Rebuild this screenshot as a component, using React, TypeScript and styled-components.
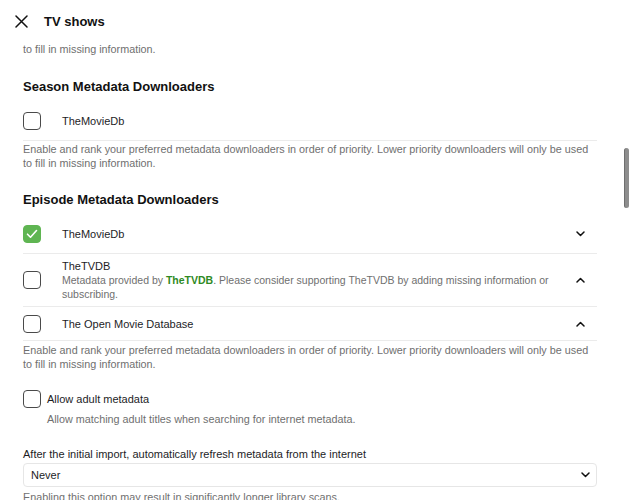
import React from "react";
import styled, { createGlobalStyle } from "styled-components";

const Global = createGlobalStyle`
  html, body { margin: 0; padding: 0; background: #fff; }
  body { font-family: "Liberation Sans", Arial, sans-serif; color: #1d1d1f; }
  * { box-sizing: border-box; }
`;

const Page = styled.div`
  position: relative;
  width: 630px;
  height: 500px;
  overflow: hidden;
  background: #fff;
`;

const Header = styled.header`
  display: flex;
  align-items: center;
  height: 42px;
  padding-left: 15px;
  gap: 16px;
`;

const Title = styled.h1`
  margin: 0;
  font-size: 13px;
  font-weight: 700;
  color: #111;
`;

const Content = styled.main`
  padding: 0 33px 0 23px;
`;

const Description = styled.p<{ $top?: number; $indent?: number }>`
  margin: ${(p) => p.$top ?? 0}px 0 0 ${(p) => p.$indent ?? 0}px;
  font-size: 10.8px;
  line-height: 14px;
  color: #6f6f6f;
`;

const Heading = styled.h2<{ $top: number }>`
  margin: ${(p) => p.$top}px 0 6px;
  font-size: 13px;
  line-height: 18px;
  font-weight: 700;
  color: #111;
`;

const List = styled.div`
  display: flex;
  flex-direction: column;
`;

const Row = styled.div<{ $compact?: boolean }>`
  display: flex;
  align-items: center;
  min-height: ${(p) => (p.$compact ? 34 : 39)}px;
  padding: 5px 0;
  border-bottom: 1px solid #ebebeb;
`;

const Box = styled.span<{ $checked?: boolean }>`
  flex: none;
  width: 18px;
  height: 18px;
  border-radius: 4px;
  border: 1.5px solid ${(p) => (p.$checked ? "#5fb552" : "#4a4a4a")};
  background: ${(p) => (p.$checked ? "#5fb552" : "#fff")};
  display: flex;
  align-items: center;
  justify-content: center;
`;

const RowText = styled.div`
  flex: 1;
  margin-left: 21px;
  display: flex;
  flex-direction: column;
`;

const RowLabel = styled.span`
  font-size: 11px;
  line-height: 14px;
  color: #1d1d1f;
`;

const RowSub = styled.span`
  font-size: 10.5px;
  line-height: 14px;
  color: #6f6f6f;
`;

const Link = styled.strong`
  color: #2f8a24;
  font-weight: 700;
`;

const Chevron = styled.span`
  flex: none;
  width: 38px;
  display: flex;
  justify-content: flex-end;
  padding-right: 12px;
  color: #111;
`;

const CheckLine = styled.label`
  display: flex;
  align-items: center;
  gap: 6px;
  margin-top: 19px;
  font-size: 11px;
  line-height: 18px;
  color: #1d1d1f;
`;

const FieldLabel = styled.div`
  margin-top: 21px;
  font-size: 11px;
  line-height: 14px;
  color: #1d1d1f;
`;

const Select = styled.div`
  margin-top: 2px;
  height: 24px;
  border: 1px solid #e6e6e6;
  border-radius: 4px;
  display: flex;
  align-items: center;
  justify-content: space-between;
  padding: 0 6px 0 7px;
  font-size: 11px;
  color: #1d1d1f;
`;

const Scrollbar = styled.div`
  position: absolute;
  right: 1px;
  top: 148px;
  width: 5px;
  height: 60px;
  border-radius: 3px;
  background: #8d8d8d;
  border-left: 1px solid #6f6f6f;
`;

const Close = () => (
  <svg width="13" height="13" viewBox="0 0 13 13" fill="none" stroke="#111" strokeWidth="1.5" strokeLinecap="round">
    <path d="M1 1L12 12M12 1L1 12" />
  </svg>
);

const Check = () => (
  <svg width="12" height="10" viewBox="0 0 12 10" fill="none" stroke="#fff" strokeWidth="1.6" strokeLinecap="round" strokeLinejoin="round">
    <path d="M1.5 5.2L4.5 8.2L10.5 1.5" />
  </svg>
);

const Chev = ({ up }: { up?: boolean }) => (
  <svg width="9" height="6" viewBox="0 0 9 6" fill="none" stroke="#111" strokeWidth="1.5" strokeLinecap="round" strokeLinejoin="round">
    <path d={up ? "M1 5L4.5 1.5L8 5" : "M1 1L4.5 4.5L8 1"} />
  </svg>
);

const intro =
  "Enable and rank your preferred metadata downloaders in order of priority. Lower priority downloaders will only be used to fill in missing information.";

export default function App() {
  return (
    <Page>
      <Global />
      <Header>
        <Close />
        <Title>TV shows</Title>
      </Header>
      <Content>
        <Description>to fill in missing information.</Description>

        <Heading $top={22}>Season Metadata Downloaders</Heading>
        <List>
          <Row>
            <Box />
            <RowText>
              <RowLabel>TheMovieDb</RowLabel>
            </RowText>
          </Row>
        </List>
        <Description $top={1}>{intro}</Description>

        <Heading $top={21}>Episode Metadata Downloaders</Heading>
        <List>
          <Row>
            <Box $checked>
              <Check />
            </Box>
            <RowText>
              <RowLabel>TheMovieDb</RowLabel>
            </RowText>
            <Chevron>
              <Chev />
            </Chevron>
          </Row>
          <Row>
            <Box />
            <RowText>
              <RowLabel>TheTVDB</RowLabel>
              <RowSub>
                Metadata provided by <Link>TheTVDB</Link>. Please consider supporting TheTVDB by adding missing
                information or subscribing.
              </RowSub>
            </RowText>
            <Chevron>
              <Chev up />
            </Chevron>
          </Row>
          <Row $compact>
            <Box />
            <RowText>
              <RowLabel>The Open Movie Database</RowLabel>
            </RowText>
            <Chevron>
              <Chev up />
            </Chevron>
          </Row>
        </List>
        <Description $top={2}>{intro}</Description>

        <CheckLine>
          <Box />
          Allow adult metadata
        </CheckLine>
        <Description $top={4} $indent={24}>
          Allow matching adult titles when searching for internet metadata.
        </Description>

        <FieldLabel>After the initial import, automatically refresh metadata from the internet</FieldLabel>
        <Select>
          <span>Never</span>
          <Chev />
        </Select>
        <Description $top={3}>Enabling this option may result in significantly longer library scans.</Description>
      </Content>
      <Scrollbar />
    </Page>
  );
}
